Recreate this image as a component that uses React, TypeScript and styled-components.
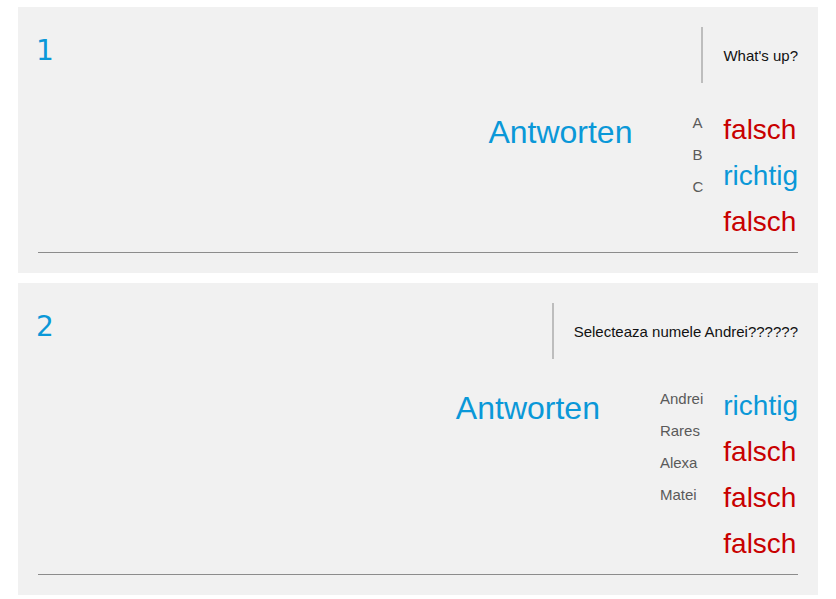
import styled, { createGlobalStyle } from 'styled-components';

const GlobalStyle = createGlobalStyle`
  body {
    margin: 0;
    background: #ffffff;
    font-family: 'Liberation Sans', Arial, sans-serif;
  }
`;

const Page = styled.div`
  display: flex;
  flex-direction: column;
  gap: 10px;
  padding: 7px 18px;
`;

const Card = styled.section`
  background: #f1f1f1;
  padding: 20px;
`;

const Header = styled.div`
  display: flex;
  justify-content: space-between;
  align-items: flex-start;
`;

const Number = styled.div`
  font-family: 'DejaVu Sans', sans-serif;
  font-size: 28px;
  line-height: 32px;
  color: #0a98d8;
  margin-top: 8px;
  margin-left: -2px;
`;

const Question = styled.div`
  display: flex;
  align-items: center;
  height: 56px;
  border-left: 2px solid #bdbdbd;
  padding-left: 20px;
  font-size: 15px;
  color: #111111;
`;

const AnswerRow = styled.div`
  display: flex;
  justify-content: flex-end;
  align-items: flex-start;
  margin-top: 31px;
`;

const Heading = styled.div`
  font-size: 32px;
  line-height: 36px;
  color: #0a98d8;
  margin-right: 60px;
`;

const Labels = styled.ul`
  list-style: none;
  margin: 0;
  padding: 0 20px 0 0;
`;

const Label = styled.li`
  font-size: 15px;
  line-height: 17px;
  margin-bottom: 15px;
  color: #5a5a5a;
`;

const Results = styled.ul`
  list-style: none;
  margin: 0;
  padding: 0;
`;

const Result = styled.li<{ $ok: boolean }>`
  font-size: 28px;
  line-height: 32px;
  margin-bottom: 14px;
  color: ${(p) => (p.$ok ? '#0a98d8' : '#c80000')};
`;

const Rule = styled.hr`
  margin: 0;
  border: 0;
  border-top: 1px solid #8c8c8c;
`;

type Item = {
  question: string;
  options: string[];
  results: boolean[];
};

const items: Item[] = [
  {
    question: "What's up?",
    options: ['A', 'B', 'C'],
    results: [false, true, false],
  },
  {
    question: 'Selecteaza numele Andrei??????',
    options: ['Andrei', 'Rares', 'Alexa', 'Matei'],
    results: [true, false, false, false],
  },
];

export default function App() {
  return (
    <>
      <GlobalStyle />
      <Page>
        {items.map((item, index) => (
          <Card key={index}>
            <Header>
              <Number>{index + 1}</Number>
              <Question>{item.question}</Question>
            </Header>
            <AnswerRow>
              <Heading>Antworten</Heading>
              <Labels>
                {item.options.map((opt) => (
                  <Label key={opt}>{opt}</Label>
                ))}
              </Labels>
              <Results>
                {item.results.map((ok, i) => (
                  <Result key={i} $ok={ok}>
                    {ok ? 'richtig' : 'falsch'}
                  </Result>
                ))}
              </Results>
            </AnswerRow>
            <Rule />
          </Card>
        ))}
      </Page>
    </>
  );
}
